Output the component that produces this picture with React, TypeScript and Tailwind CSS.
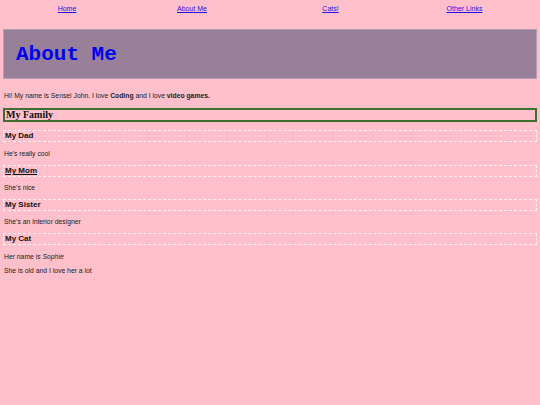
export default function App() {
  const h3 = "mx-[3px] h-[12px] border border-dashed border-white/80 flex items-center pl-[1px] text-[8px] font-bold leading-none text-[#111]";
  const p = "ml-[4px] h-[8px] leading-[8px] text-[6.8px] text-[#222]";
  return (
    <div className="w-[540px] h-[405px] bg-[#ffc0cb] overflow-hidden" style={{ fontFamily: '"Liberation Sans", Arial, sans-serif' }}>
      <nav className="h-[29px] pt-[5px] grid grid-cols-[134px_116px_161px_107px] text-center text-[7px] leading-[8px]">
        <a href="#" className="text-[#2a10e8] underline">Home</a>
        <a href="#" className="text-[#2a10e8] underline">About Me</a>
        <a href="#" className="text-[#2a10e8] underline">Cats!</a>
        <a href="#" className="text-[#2a10e8] underline">Other Links</a>
      </nav>
      <header className="mx-[3px] h-[50px] border border-[#b39fb3] bg-[#978098] flex items-center pl-[12px]">
        <h1 className="text-[21px] font-bold text-[#0000ee] leading-none" style={{ fontFamily: '"Liberation Mono", "Courier New", monospace' }}>About Me</h1>
      </header>
      <p className={p + " mt-[13px]"}>Hi! My name is Sensei John. I love <b>Coding</b> and I love <b>video games.</b></p>
      <h2 className="mx-[3px] mt-[8px] h-[14px] border-2 border-[#3f6f2f] flex items-center pl-[1px] text-[10px] font-bold leading-none text-[#111]" style={{ fontFamily: '"Liberation Serif", "Times New Roman", serif' }}>My Family</h2>
      <h3 className={h3 + " mt-[8px]"}>My Dad</h3>
      <p className={p + " mt-[8px]"}>He's really cool</p>
      <h3 className={h3 + " mt-[7px]"}><span className="underline">My Mom</span></h3>
      <p className={p + " mt-[7px]"}>She's nice</p>
      <h3 className={h3 + " mt-[7px]"}>My Sister</h3>
      <p className={p + " mt-[7px]"}>She's an interior designer</p>
      <h3 className={h3 + " mt-[7px]"}>My Cat</h3>
      <p className={p + " mt-[8px]"}>Her name is <i>Sophie</i></p>
      <p className={p + " mt-[6px]"}>She is old and I love her a lot</p>
    </div>
  );
}
